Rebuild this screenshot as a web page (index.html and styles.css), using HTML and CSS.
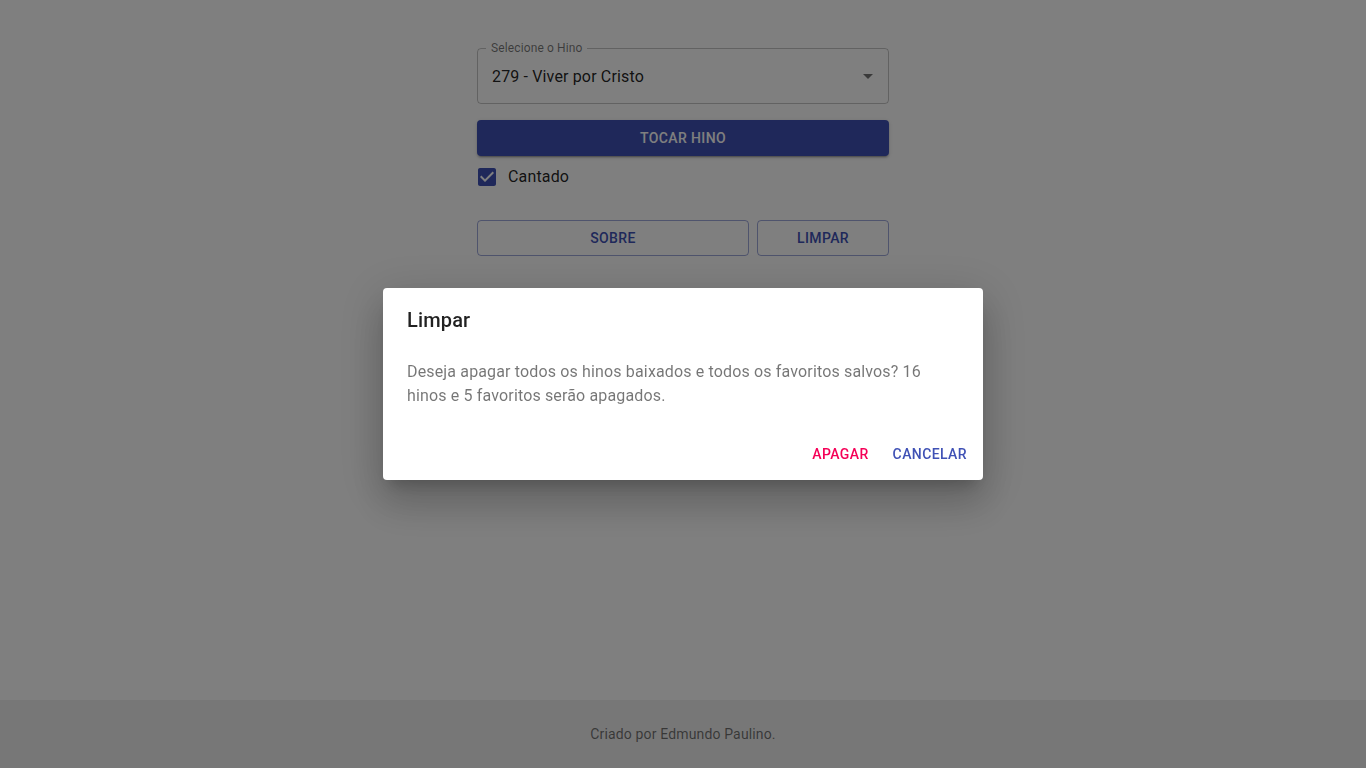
FILE: index.html
```html
<!DOCTYPE html>
<html lang="pt-BR">
<head>
<meta charset="utf-8">
<title>Hinos</title>
<link rel="stylesheet" href="styles.css">
</head>
<body>
<main class="main">
  <div class="column">
    <div class="select">
      <span class="select-label">Selecione o Hino</span>
      <span class="select-value">279 - Viver por Cristo</span>
      <svg class="select-arrow" viewBox="0 0 24 24" width="24" height="24"><path d="M7 10l5 5 5-5z" fill="rgba(0,0,0,0.54)"/></svg>
    </div>
    <button class="btn-contained">TOCAR HINO</button>
    <label class="check-row">
      <span class="check-box">
        <svg viewBox="0 0 24 24" width="24" height="24"><path fill="#3f51b5" d="M19 3H5c-1.11 0-2 .9-2 2v14c0 1.1.89 2 2 2h14c1.11 0 2-.9 2-2V5c0-1.1-.89-2-2-2zm-9 14l-5-5 1.41-1.41L10 14.17l7.59-7.59L19 8l-9 9z"/></svg>
      </span>
      <span class="check-label">Cantado</span>
    </label>
    <div class="btn-row">
      <button class="btn-outlined btn-wide">SOBRE</button>
      <button class="btn-outlined btn-narrow">LIMPAR</button>
    </div>
  </div>
</main>
<footer class="footer">Criado por Edmundo Paulino.</footer>

<div class="backdrop">
  <div class="dialog">
    <h2 class="dialog-title">Limpar</h2>
    <div class="dialog-content">
      <p class="dialog-text">Deseja apagar todos os hinos baixados e todos os favoritos salvos? 16 hinos e 5 favoritos serão apagados.</p>
    </div>
    <div class="dialog-actions">
      <button class="btn-text btn-secondary">APAGAR</button>
      <button class="btn-text btn-primary">CANCELAR</button>
    </div>
  </div>
</div>
</body>
</html>
```
FILE: styles.css
```css
* { box-sizing: border-box; }
html, body { margin: 0; padding: 0; }
body {
  font-family: Roboto, "Liberation Sans", sans-serif;
  color: rgba(0,0,0,0.87);
  background: #fff;
  min-height: 100vh;
  display: flex;
  flex-direction: column;
}
.main {
  flex: 1;
  display: flex;
  justify-content: center;
  padding-top: 48px;
}
.column {
  width: 412px;
  display: flex;
  flex-direction: column;
}
.select {
  position: relative;
  height: 56px;
  border: 1px solid rgba(0,0,0,0.23);
  border-radius: 4px;
  display: flex;
  align-items: center;
  padding: 0 14px 0 14px;
}
.select-label {
  position: absolute;
  left: 8px;
  top: -8px;
  padding: 0 5px;
  background: #fff;
  font-size: 12px;
  line-height: 14px;
  color: rgba(0,0,0,0.54);
  letter-spacing: 0.01em;
}
.select-value {
  font-size: 16px;
  letter-spacing: 0.00938em;
  line-height: 19px;
}
.select-arrow {
  position: absolute;
  right: 8px;
  top: calc(50% - 12px);
}
button {
  font-family: Roboto, "Liberation Sans", sans-serif;
  font-size: 14px;
  font-weight: 500;
  letter-spacing: 0.02857em;
  cursor: pointer;
}
.btn-contained {
  margin-top: 16px;
  height: 36px;
  border: 0;
  border-radius: 4px;
  background: #3f51b5;
  color: #fff;
  box-shadow: 0px 3px 1px -2px rgba(0,0,0,0.2), 0px 2px 2px 0px rgba(0,0,0,0.14), 0px 1px 5px 0px rgba(0,0,0,0.12);
}
.check-row {
  display: flex;
  align-items: center;
  height: 42px;
  margin-left: -11px;
}
.check-box {
  width: 42px;
  height: 42px;
  padding: 9px;
  display: flex;
}
.check-label {
  font-size: 16px;
  line-height: 24px;
  padding-bottom: 1px;
  letter-spacing: 0.00938em;
}
.btn-row {
  margin-top: 22px;
  display: flex;
  gap: 8px;
}
.btn-outlined {
  height: 36px;
  background: transparent;
  border: 1px solid rgba(63,81,181,0.5);
  border-radius: 4px;
  color: #3f51b5;
}
.btn-wide { flex: 0 0 272px; }
.btn-narrow { flex: 1; }
.footer {
  height: 68px;
  background: #eeeeee;
  display: flex;
  align-items: center;
  justify-content: center;
  font-size: 14px;
  letter-spacing: 0.01071em;
  color: rgba(0,0,0,0.54);
}
.backdrop {
  position: fixed;
  inset: 0;
  background: rgba(0,0,0,0.5);
  display: flex;
  align-items: center;
  justify-content: center;
}
.dialog {
  width: 600px;
  background: #fff;
  border-radius: 4px;
  box-shadow: 0px 11px 15px -7px rgba(0,0,0,0.2), 0px 24px 38px 3px rgba(0,0,0,0.14), 0px 9px 46px 8px rgba(0,0,0,0.12);
}
.dialog-title {
  margin: 0;
  padding: 16px 24px;
  font-size: 20px;
  font-weight: 500;
  line-height: 32px;
  letter-spacing: 0.0075em;
}
.dialog-content {
  padding: 8px 24px;
}
.dialog-text {
  margin: 0 0 12px;
  font-size: 16px;
  line-height: 24px;
  letter-spacing: 0.00938em;
  color: rgba(0,0,0,0.54);
}
.dialog-actions {
  padding: 8px;
  display: flex;
  justify-content: flex-end;
  gap: 8px;
}
.btn-text {
  height: 36px;
  min-width: 64px;
  padding: 6px 8px;
  border: 0;
  background: transparent;
  border-radius: 4px;
}
.btn-secondary { color: #f50057; }
.btn-primary { color: #3f51b5; }
```
